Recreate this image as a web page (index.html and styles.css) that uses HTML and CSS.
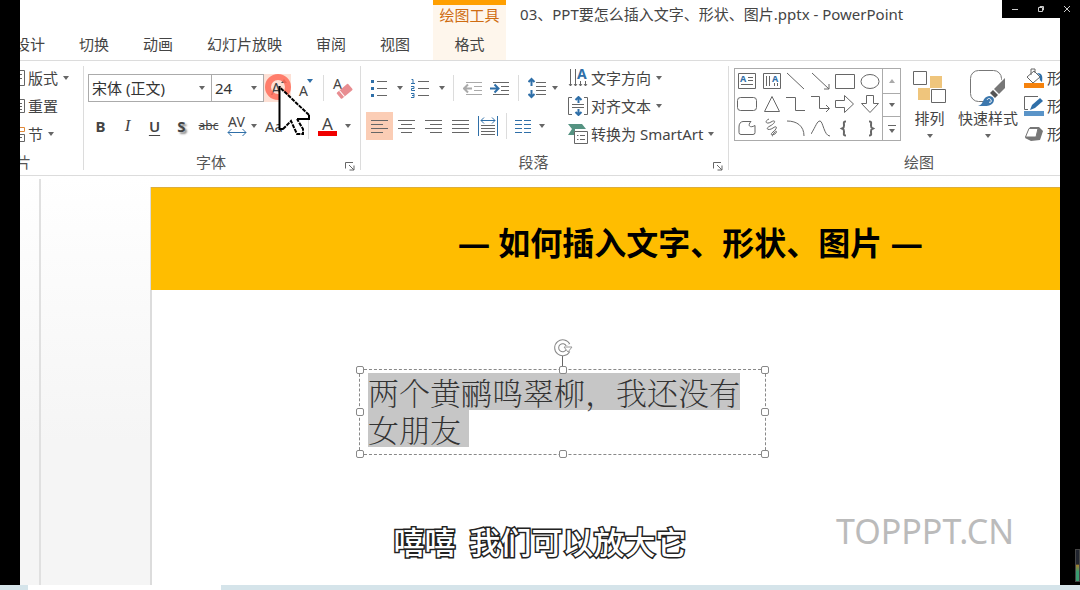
FILE: index.html
```html
<!DOCTYPE html>
<html lang="zh-CN">
<head>
<meta charset="utf-8">
<title>03、PPT要怎么插入文字、形状、图片.pptx - PowerPoint</title>
<link rel="stylesheet" href="styles.css">
</head>
<body>
<div class="screen">
  <div class="window">
    <header class="header">
      <nav class="tabs">
        <a href="#design">设计</a><a href="#transitions">切换</a><a href="#animations">动画</a><a href="#slideshow">幻灯片放映</a><a href="#review">审阅</a><a href="#view">视图</a>
      </nav>
      <div class="context">
        <span class="context-title">绘图工具</span>
        <a href="#format">格式</a>
      </div>
      <div class="doc-title">03、PPT要怎么插入文字、形状、图片.pptx - PowerPoint</div>
    </header>

    <div class="ribbon">
      <section class="group slides">
        <div class="stack">
          <button class="row-btn"><svg width="5" height="18" viewBox="0 0 5 18"><path d="M0 1.500H4.500V16.500H0M0 5.500H2M0 9.500H2" class="ln"/></svg>版式<i class="caret"></i></button>
          <button class="row-btn"><svg width="5" height="18" viewBox="0 0 5 18"><path d="M0 2.500H4.500V15.500H0M0 6.500H2M0 9.500H2M0 12.500H2" class="ln"/></svg>重置</button>
          <button class="row-btn"><svg width="5" height="18" viewBox="0 0 5 18"><path d="M0 2.500H4.500V6.500H0" class="ln orange"/><path d="M0 9.500H4.500V16.500H0M0 12.500H2" class="ln"/></svg>节<i class="caret"></i></button>
        </div>
        <div class="label label-cut"><span>幻灯片</span></div>
      </section>
      <div class="divider"></div>

      <section class="group font">
        <div class="rows">
          <div class="row">
            <span class="pick pick-font"><select aria-label="字体"><option>宋体 (正文)</option></select><i class="caret"></i></span>
            <span class="pick pick-size"><select aria-label="字号"><option>24</option></select><i class="caret"></i></span>
            <button class="tool hot" aria-label="增大字号"><svg width="24" height="24" viewBox="0 0 24 24"><text x="5" y="19" class="ga" font-size="16">A</text><path d="M15 7l3-4 3 4z" fill="#555"/></svg></button>
            <button class="tool" aria-label="减小字号"><svg width="24" height="24" viewBox="0 0 24 24"><text x="6" y="20" class="ga" font-size="14">A</text><path d="M14 3h6l-3 4z" fill="#2f6fa8"/></svg></button>
            <i class="sep wide-sep"></i>
            <button class="tool" aria-label="清除格式"><svg width="24" height="24" viewBox="0 0 24 24"><text x="2" y="13" class="ga" font-size="14">A</text><g transform="rotate(-40 14 15)"><rect x="6" y="11" width="15" height="8" rx="1" fill="#e88d91"/><path d="M10 11v8" stroke="#fff"/></g></svg></button>
          </div>
          <div class="row font-row">
            <button class="tool"><b>B</b></button><button class="tool"><em>I</em></button><button class="tool"><u>U</u></button><button class="tool shade">S</button><button class="tool strike">abc</button>
            <button class="tool drop" aria-label="字符间距"><svg width="20" height="24" viewBox="0 0 20 24"><text x="1" y="13" class="ga" font-size="14">AV</text><path d="M1 18.500H19M4.500 15L1 18.500l3.500 3.500M15.500 15l3.500 3.500-3.500 3.500" class="ln blue"/></svg><i class="caret"></i></button>
            <button class="tool case" aria-label="更改大小写">Aa</button>
            <i class="sep"></i>
            <button class="tool drop color" aria-label="字体颜色"><svg width="20" height="24" viewBox="0 0 20 24"><text x="4" y="16" class="ga" font-size="17">A</text><path d="M0 17h19v5H0z" fill="#f00000"/></svg><i class="caret"></i></button>
          </div>
        </div>
        <div class="label"><span>字体</span><button class="launch" aria-label="字体设置"><svg width="10" height="10" viewBox="0 0 10 10"><path d="M.5 7.500V1.500H8M4 4l5 5M9 4.500V9H4.500" class="ln"/></svg></button></div>
      </section>
      <div class="divider"></div>

      <section class="group para">
        <div class="para-body">
          <div class="rows">
            <div class="row">
              <button class="tool drop wide" aria-label="项目符号"><svg width="18" height="22" viewBox="0 0 18 22"><path d="M7 4.500h10M7 11.500h10M7 18.500h10" class="ln"/><path d="M1 3h3v3H1zM1 10h3v3H1zM1 17h3v3H1z" fill="#2f6fa8"/></svg><i class="caret"></i></button>
              <button class="tool drop wide" aria-label="编号"><svg width="20" height="22" viewBox="0 0 20 22"><path d="M8 4.500h11M8 11.500h11M8 18.500h11" class="ln"/><path d="M1.500 2.500H3v4M1 6.500h4M1 9.500h3v2H1.500v2H5M1 16.500h3v4H1M2 18.500h2" class="ln blue"/></svg><i class="caret"></i></button>
              <i class="sep"></i>
              <button class="tool" aria-label="减少缩进"><svg width="20" height="20" viewBox="0 0 20 20"><path d="M3 4.500h16M11 8.500h8M11 12.500h8M3 16.500h16" class="ln pale"/><path d="M1 10.500h8M5 6.500l-4 4 4 4" class="ln pale thick"/></svg></button>
              <button class="tool" aria-label="增加缩进"><svg width="20" height="20" viewBox="0 0 20 20"><path d="M3 4.500h16M11 8.500h8M11 12.500h8M3 16.500h16" class="ln"/><path d="M0 10.500h8M4.500 6.500l4 4-4 4" class="ln blue thick"/></svg></button>
              <i class="sep"></i>
              <button class="tool drop spacing" aria-label="行距"><svg width="20" height="22" viewBox="0 0 20 22"><path d="M8 5.500h10M8 9.500h10M8 13.500h10M8 17.500h10" class="ln"/><path d="M3.500 2v7M.5 5l3-3 3 3M3.500 13v7M.5 17l3 3 3-3" class="ln blue thick"/></svg><i class="caret"></i></button>
            </div>
            <div class="row">
              <button class="tool on" aria-label="左对齐"><svg width="18" height="16" viewBox="0 0 18 16"><path d="M0 2.500h17M0 6.500h12M0 10.500h17M0 14.500h12" class="ln"/></svg></button>
              <button class="tool" aria-label="居中"><svg width="18" height="16" viewBox="0 0 18 16"><path d="M0 2.500h17M3 6.500h11M0 10.500h17M3 14.500h11" class="ln"/></svg></button>
              <button class="tool" aria-label="右对齐"><svg width="18" height="16" viewBox="0 0 18 16"><path d="M0 2.500h17M5 6.500h12M0 10.500h17M5 14.500h12" class="ln"/></svg></button>
              <button class="tool" aria-label="两端对齐"><svg width="18" height="16" viewBox="0 0 18 16"><path d="M0 2.500h17M0 6.500h17M0 10.500h17M0 14.500h17" class="ln"/></svg></button>
              <button class="tool" aria-label="分散对齐"><svg width="20" height="20" viewBox="0 0 20 20"><path d="M.5 0v20M19.500 0v20M3 4.500h14M6 1.500l-3 3 3 3M14 1.500l3 3-3 3" class="ln blue"/><path d="M3 9.500h14M3 12.500h14M3 15.500h14M3 18.500h14" class="ln"/></svg></button>
              <i class="sep"></i>
              <button class="tool drop columns" aria-label="分栏"><svg width="17" height="16" viewBox="0 0 17 16"><path d="M0 2.500h7M0 6.500h7M0 10.500h7M0 14.500h7M9 2.500h7M9 6.500h7M9 10.500h7M9 14.500h7" class="ln blue"/></svg><i class="caret"></i></button>
            </div>
          </div>
          <div class="stack">
            <button class="row-btn"><svg width="20" height="20" viewBox="0 0 20 20"><path d="M2.500 1v17M7.500 1v17M12.500 13v5M17.500 13v5M1 16l1.500 2L4 16M6 16l1.500 2L9 16M11 16l1.500 2 1.500-2M16 16l1.500 2 1.500-2" class="ln"/><text x="9" y="11" class="ga blue-a" font-size="14">A</text></svg>文字方向<i class="caret"></i></button>
            <button class="row-btn"><svg width="20" height="20" viewBox="0 0 20 20"><path d="M4 1.500H.5v17H4M16 1.500h3.500v17H16M4 8.500h12M4 11.500h12" class="ln"/><path d="M10.500 1v6M7.500 4l3-3 3 3M10.500 13v6M7.500 16l3 3 3-3" class="ln blue thick"/></svg>对齐文本<i class="caret"></i></button>
            <button class="row-btn"><svg width="20" height="20" viewBox="0 0 20 20"><path d="M0 0h14l4 5H7v6H0l4-6z" fill="#559382"/><path d="M6.500 7.500h13v12h-13z" fill="#fff" stroke="#666"/><path d="M9 11.500h1.500M12 11.500h5M9 15.500h1.500M12 15.500h5" class="ln"/></svg>转换为 SmartArt<i class="caret"></i></button>
          </div>
        </div>
        <div class="label"><span>段落</span><button class="launch" aria-label="段落设置"><svg width="10" height="10" viewBox="0 0 10 10"><path d="M.5 7.500V1.500H8M4 4l5 5M9 4.500V9H4.500" class="ln"/></svg></button></div>
      </section>
      <div class="divider"></div>

      <section class="group draw">
        <div class="draw-body">
          <div class="gallery">
            <div class="shapes">
              <button aria-label="文本框"><svg viewBox="0 0 20 20"><path d="M1.500 2.500h17v15h-17zM11 6.500h5M11 9.500h5M4 13.500h12" class="ln"/><text x="3" y="11" class="ga blue-a" font-size="9">A</text></svg></button>
              <button aria-label="竖排文本框"><svg viewBox="0 0 20 20"><path d="M1.500 2.500h17v15h-17zM4.500 5v10M7.500 5v10M12.500 12v3M15.500 12v3" class="ln"/><text x="10" y="11" class="ga blue-a" font-size="9">A</text></svg></button>
              <button aria-label="直线"><svg viewBox="0 0 20 20"><path d="M1 2l17 16" class="ln"/></svg></button>
              <button aria-label="箭头"><svg viewBox="0 0 20 20"><path d="M1 2l17 16M18 13v5h-5" class="ln"/></svg></button>
              <button aria-label="矩形"><svg viewBox="0 0 20 20"><path d="M.5 3.500h19v14H.5z" class="ln"/></svg></button>
              <button aria-label="椭圆"><svg viewBox="0 0 20 20"><ellipse cx="10" cy="10.500" rx="9" ry="7" class="ln"/></svg></button>
              <button aria-label="圆角矩形"><svg viewBox="0 0 20 20"><rect x=".5" y="3.500" width="19" height="13" rx="3" class="ln"/></svg></button>
              <button aria-label="三角形"><svg viewBox="0 0 20 20"><path d="M10 2.500l7.500 15h-15z" class="ln"/></svg></button>
              <button aria-label="肘形连接符"><svg viewBox="0 0 20 20"><path d="M0 3.500h9.500v13H19" class="ln"/></svg></button>
              <button aria-label="肘形箭头"><svg viewBox="0 0 20 20"><path d="M0 2.500h8.500v12H18M15 11l3.500 3.500L15 18" class="ln"/></svg></button>
              <button aria-label="右箭头"><svg viewBox="0 0 20 20"><path d="M.5 6.500h9v-5l9 8.500-9 8.500v-5h-9z" class="ln"/></svg></button>
              <button aria-label="下箭头"><svg viewBox="0 0 20 20"><path d="M6.500 1.500h7v8h5L10 18.500 1.500 9.500h5z" class="ln"/></svg></button>
              <button aria-label="任意多边形"><svg viewBox="0 0 20 20"><path d="M6 3.500h8c-4 4-1 7 4 4v7q0 2-2 2H4q-2 0-2-2V9q0-5 4-5.500z" class="ln"/></svg></button>
              <button aria-label="自由曲线"><svg viewBox="0 0 20 20"><path d="M7 1C2 3 4 7 9 4s5 1-1 4-1 5 3 2 5 0 0 4 2 3 3 1 0-3-2 0-2 3-1 3" class="ln"/></svg></button>
              <button aria-label="弧形"><svg viewBox="0 0 20 20"><path d="M1 3c10 0 17 5 17 15" class="ln"/></svg></button>
              <button aria-label="曲线"><svg viewBox="0 0 20 20"><path d="M0 16C5 8 6 3 9 3s4 15 10 15" class="ln"/></svg></button>
              <button aria-label="左大括号"><svg viewBox="0 0 20 20"><path d="M11 3.500c-3 0-2 1-2 4s-1 2.500-2 3c1 .5 2 0 2 3s-1 4 2 4" class="ln bold"/></svg></button>
              <button aria-label="右大括号"><svg viewBox="0 0 20 20"><path d="M9 3.500c3 0 2 1 2 4s1 2.500 2 3c-1 .5-2 0-2 3s1 4-2 4" class="ln bold"/></svg></button>
            </div>
            <div class="scroller">
              <button aria-label="向上"><i class="caret up"></i></button>
              <button aria-label="向下"><i class="caret"></i></button>
              <button aria-label="更多" class="more"><i class="caret"></i></button>
            </div>
          </div>
          <button class="big arrange"><svg width="34" height="36" viewBox="0 0 34 36"><path d="M17 6h12v12H17zM5 18h12v12H5z" fill="#efc57c"/><path d="M.5 1.500h13v13H.5zM18.500 19.500h14v13h-14z" fill="#fff" stroke="#666"/></svg>排列<i class="caret"></i></button>
          <button class="big"><svg width="36" height="38" viewBox="0 0 36 38"><rect x=".5" y="1.500" width="31" height="31" rx="8" fill="#fff" stroke="#777"/><path d="M12 37l23-31v20L26 37z" fill="#fff"/><path d="M35 9v10l-6 6-5-5z" fill="#777"/><path d="M23 21l5 5-3 3-5-5z" fill="#555"/><path d="M8 37c6-1 4-9 11-10 5 0 6 4 4 7-3 4-9 3-15 3z" fill="#3c77ad"/><path d="M17 31c1-2 3-2 4 0s-1 3-2 2" fill="none" stroke="#fff"/></svg>快速样式<i class="caret"></i></button>
          <div class="stack">
            <button class="row-btn"><svg width="20" height="20" viewBox="0 0 20 20"><path d="M3 9l7-6 6 6-7 6zM7 7V1h4v4" class="ln"/><path d="M13 5c5 0 6 3 5 9-2-1-3-3-2-6z" fill="#2f6fa8"/><path d="M0 15h20v5H0z" fill="#f5820d"/></svg>形状填充</button>
            <button class="row-btn"><svg width="20" height="20" viewBox="0 0 20 20"><path d="M14 .5H.5v13H4" class="ln"/><path d="M6 14l2-5 8-7 3 3-8 7z" fill="#2f6fa8"/><path d="M0 15h20v5H0z" fill="#5a94c8"/></svg>形状轮廓</button>
            <button class="row-btn"><svg width="20" height="20" viewBox="0 0 20 20"><path d="M6 3h9l4 4-3 9-9 1-6-3z" fill="#777"/><path d="M5 4.500h9l-2 8.500H1.500z" fill="#fff" stroke="#777"/></svg>形状效果</button>
          </div>
        </div>
        <div class="label"><span>绘图</span></div>
      </section>
    </div>

    <main class="work">
      <aside class="ruler"></aside>
      <aside class="gutter"></aside>
      <article class="slide">
        <h1>— 如何插入文字、形状、图片 —</h1>
        <div class="textbox">
          <p><span>两个黄鹂鸣翠柳，我还没有</span><br><span class="last">女朋友</span></p>
          <svg class="rotate" width="20" height="28" viewBox="0 0 20 28"><path d="M9.500 17v11" class="ln"/><path d="M15 11.500A6 6 0 1 1 15 6" fill="none" stroke="#888" stroke-width="5"/><path d="M15 11.500A6 6 0 1 1 15 6" fill="none" stroke="#fff" stroke-width="3"/><path d="M11 8h8l-4 5z" fill="#fff" stroke="#999"/></svg>
          <i class="knob nw"></i><i class="knob n"></i><i class="knob ne"></i><i class="knob w"></i><i class="knob e"></i><i class="knob sw"></i><i class="knob s"></i><i class="knob se"></i>
        </div>
        <div class="watermark">TOPPPT.CN</div>
      </article>
    </main>
  </div>
  <footer class="taskbar"><span></span></footer>

  <div class="win-controls">
    <button aria-label="最小化"><svg width="8" height="8" viewBox="0 0 8 8"><path d="M1 4.500h6"/></svg></button>
    <button aria-label="还原"><svg width="8" height="8" viewBox="0 0 8 8"><path d="M1.500 2.500h4v4h-4zM3 2.500v-1h3.500V5h-1"/></svg></button>
    <button aria-label="关闭"><svg width="8" height="8" viewBox="0 0 8 8"><path d="M1 1l6 6M7 1L1 7"/></svg></button>
  </div>
  <svg class="pointer" width="48" height="64" viewBox="0 0 48 64"><circle cx="14" cy="15" r="10" fill="none" stroke="#ff6b58" stroke-opacity=".85" stroke-width="6"/><path d="M15.500 15v42h3l9-8 6 13h5v-5l-6-10h12v-3z" fill="#fff"/><path d="M15.500 14v43h4M33 47h12v-4" fill="none" stroke="#000" stroke-width="2"/><path d="M19 57l8-8 6 13h6v-5l-6-10M45 43L15.500 15" fill="none" stroke="#000" stroke-width="2" stroke-dasharray="4 1"/></svg>
  <p class="subtitle">嘻嘻&nbsp; 我们可以放大它</p>
  <div class="meter"></div>
</div>
</body>
</html>
```
FILE: styles.css
```css
* { box-sizing: border-box; }
body {
  margin: 0;
  background: #000;
  color: #444;
  font: 15px/20px "Noto Sans", "Noto Sans CJK SC", sans-serif;
}
a { color: inherit; text-decoration: none; }
button, select { font: inherit; color: inherit; background: none; border: 0; padding: 0; margin: 0; }
svg { display: block; flex: none; }
.ln { fill: none; stroke: #666; stroke-width: 1; }
.ln.orange { stroke: #e08a3c; }
.ln.blue { stroke: #2f6fa8; }
.ln.pale { stroke: #aaa; }
.ln.bold, .ln.thick { stroke-width: 2; }
.ga { fill: #444; font-family: "Noto Sans", sans-serif; }
.blue-a { fill: #2f6fa8; font-weight: 700; }

.screen { position: relative; display: flex; flex-direction: column; height: 100vh; overflow: hidden; }
.window { flex: 1; min-height: 0; margin: 0 20px; display: flex; flex-direction: column; background: #fff; overflow: hidden; }

.header { display: flex; height: 61px; flex: none; border-bottom: 1px solid #dcdcdc; white-space: nowrap; }
.tabs { display: flex; align-items: flex-end; gap: 34px; margin-left: -5px; padding: 0 23px 6px 0; }
.context { width: 73px; display: flex; flex-direction: column; align-items: center; justify-content: space-between; border-top: 5px solid #ff9f00; background: #fef6ec; padding-bottom: 6px; }
.context-title { color: #cf6c12; }
.doc-title { margin: 4px 0 0 14px; }

.ribbon { display: flex; height: 115px; flex: none; border-bottom: 1px solid #dcdcdc; }
.divider { width: 1px; flex: none; margin: 5px 0; background: #dcdcdc; }
.group { display: flex; flex-direction: column; flex: none; white-space: nowrap; }
.slides { width: 63px; }
.font { width: 276px; }
.para { width: 367px; }
.draw { width: 380px; }
.label { margin-top: auto; height: 26px; display: flex; align-items: center; color: #555; }
.label span { flex: 1; text-align: center; }
.label-cut { margin-left: -34px; }
.label-cut span { text-align: left; }
.launch { width: 22px; padding: 8px 0 0 7px; }

.stack { padding-top: 3px; }
.row-btn { display: flex; align-items: center; gap: 3px; height: 28px; }
.row-btn .caret { margin-left: 2px; }
.caret { flex: none; width: 0; border: 3px solid transparent; border-top: 4px solid #666; border-bottom: 0; }
.caret.up { border-top: 0; border-bottom: 4px solid #aaa; }

.rows { padding: 13px 0 0 4px; display: flex; flex-direction: column; gap: 10px; }
.row { display: flex; align-items: center; height: 28px; }
.font-row { margin-left: -1px; }
.pick { display: grid; align-items: center; height: 28px; border: 1px solid #ababab; }
.pick select, .pick .caret { grid-area: 1 / 1; }
.pick select { appearance: none; height: 26px; padding-left: 3px; color: #333; }
.pick .caret { justify-self: end; margin-right: 6px; pointer-events: none; }
.pick-font { width: 124px; }
.pick-size { width: 53px; margin-left: -1px; }
.tool { width: 27px; height: 28px; display: flex; align-items: center; justify-content: center; }
.tool.hot { background: #fde0d5; }
.tool.on { background: #fbcdb5; }
.tool em { font-family: "Liberation Serif", serif; font-size: 17px; }
.tool u { font-weight: 600; text-underline-offset: 3px; }
.tool.shade { font-weight: 700; text-shadow: 2px 2px 2px #888; }
.tool.strike { font-size: 12px; text-decoration: line-through; }
.tool.drop { width: 40px; gap: 4px; }
.tool.wide { width: 41px; gap: 9px; }
.tool.spacing { width: 38px; }
.tool.columns { width: 36px; gap: 7px; }
.tool.color { gap: 7px; }
.tool.case { width: 41px; justify-content: flex-start; padding-left: 3px; }
.sep { width: 1px; height: 26px; margin: 0 5px; background: #dcdcdc; }

.para-body { display: flex; }
.para .rows { width: 207px; padding-left: 5px; }

.draw-body { display: flex; align-items: flex-start; }
.gallery { display: flex; margin: 7px 0 0 5px; width: 167px; height: 73px; border: 1px solid #ababab; }
.shapes { flex: 1; display: grid; grid-template-columns: repeat(6, 1fr); grid-template-rows: repeat(3, 1fr); }
.shapes button { display: grid; place-items: center; }
.shapes svg { width: 20px; height: 20px; }
.scroller { width: 18px; display: grid; grid-template-rows: repeat(3, 1fr); border-left: 1px solid #ababab; }
.scroller button { display: flex; flex-direction: column; gap: 3px; align-items: center; justify-content: center; }
.scroller button + button { border-top: 1px solid #ababab; }
.more::before { content: ""; width: 8px; height: 1px; background: #666; }
.big { display: flex; flex-direction: column; align-items: center; width: 60px; height: 88px; margin-right: 6px; padding-top: 8px; }
.big svg { height: 38px; margin-bottom: 1px; }
.big .caret { margin-top: 6px; }
.big.arrange { width: 57px; margin-right: 0; }

.work { flex: 1; min-height: 0; display: flex; background: linear-gradient(#fff, #f5f5f5 65%); }
.ruler { width: 21px; flex: none; margin-top: 3px; border-right: 2px solid #e0e0e0; }
.gutter { width: 109px; flex: none; }
.slide { position: relative; flex: 1; margin-top: 11px; background: #fff; border-left: 2px solid #dcdcdc; }
h1 { margin: 0 0 0 -1px; height: 103px; padding-left: 307px; background: #ffbd00; border-top: 1px solid #dcae3c; color: #000; font: 700 32px/110px "Noto Sans", "Noto Sans CJK SC", sans-serif; white-space: nowrap; overflow: hidden; }
.textbox { position: absolute; left: 207px; top: 182px; width: 407px; height: 86px; border: 1px dashed #888; padding: 3px 0 0 8px; }
.textbox p { margin: 0; color: #333; font: 200 31px/37px "Noto Serif CJK SC", "Noto Sans CJK SC", serif; white-space: nowrap; }
.textbox span { display: inline-block; background: #c6c6c6; }
.last { padding-right: 8px; }
.knob { position: absolute; width: 8px; height: 8px; margin: -4px; border: 1px solid #888; border-radius: 2px; background: #fff; }
.nw, .n, .ne { top: 0; }
.w, .e { top: 50%; }
.sw, .s, .se { top: 100%; }
.nw, .w, .sw { left: 0; }
.n, .s { left: 50%; }
.ne, .e, .se { left: 100%; }
.rotate { position: absolute; left: 193px; top: -31px; }
.watermark { position: absolute; right: 46px; bottom: 30px; color: #bbb; font: 34px/48px "Noto Sans", sans-serif; }

.taskbar { height: 5px; flex: none; background: #d5e4ea; padding-left: 28px; }
.taskbar span { display: block; width: 193px; height: 5px; background: #fff; }
.win-controls { position: absolute; top: 0; right: 0; display: flex; height: 18px; background: #000; }
.win-controls button { width: 26px; display: grid; place-items: center; }
.win-controls path { fill: none; stroke: #ccc; stroke-width: 1; }
.pointer { position: absolute; left: 264px; top: 72px; pointer-events: none; }
.subtitle { position: absolute; left: 0; right: 0; bottom: 28px; margin: 0; text-align: center; color: #fff; font: 500 31px/42px "Noto Sans CJK SC", sans-serif; -webkit-text-stroke: 3px #222; paint-order: stroke fill; }
.meter { position: absolute; right: 0; bottom: 8px; width: 5px; height: 33px; border: 1px solid #444; background: linear-gradient(#20242e 45%, #a08030 50%, #3a9a70 70%); }
```
